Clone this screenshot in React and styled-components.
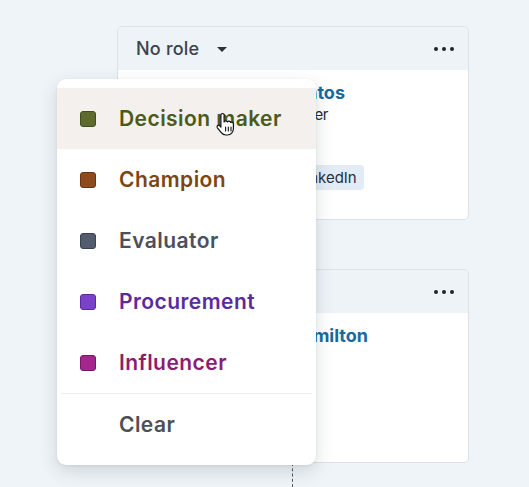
import React from 'react'
import styled, { createGlobalStyle } from 'styled-components'

const GlobalStyle = createGlobalStyle`
  html, body {
    margin: 0;
    padding: 0;
    background: #eff4f8;
    font-family: Inter, 'Liberation Sans', Arial, sans-serif;
    -webkit-font-smoothing: antialiased;
  }
`

const Page = styled.div`
  position: relative;
  width: 529px;
  height: 487px;
  overflow: hidden;
  padding: 26px 0 0 117px;
  box-sizing: border-box;
`

const Column = styled.div`
  display: flex;
  flex-direction: column;
  width: 352px;
`

const Card = styled.div`
  height: 194px;
  background: #fff;
  border: 1px solid #dbe2e9;
  border-radius: 5px;
  box-sizing: border-box;
  display: flex;
  flex-direction: column;
  overflow: hidden;
`

const CardHeader = styled.div`
  height: 43px;
  background: #eef3f8;
  display: flex;
  align-items: center;
  justify-content: space-between;
  padding: 0 14px 0 18px;
`

const RoleButton = styled.div`
  display: flex;
  align-items: center;
  gap: 18px;
  font-size: 18px;
  font-weight: 500;
  letter-spacing: 0.2px;
  color: #3b4250;
`

const Caret = styled.span`
  width: 0;
  height: 0;
  border-left: 5px solid transparent;
  border-right: 5px solid transparent;
  border-top: 5px solid #2c313a;
  margin-top: 1px;
`

const Dots = styled.div`
  display: flex;
  gap: 4px;
  span {
    width: 4px;
    height: 4px;
    border-radius: 50%;
    background: #1f232a;
  }
`

const CardBody = styled.div`
  display: flex;
  gap: 14px;
  padding: 11px 18px 0 ${p => p.$indent}px;
`

const Avatar = styled.div`
  width: 42px;
  height: 42px;
  border-radius: 50%;
  background: #c9d6e2;
  flex-shrink: 0;
`

const Info = styled.div`
  display: flex;
  flex-direction: column;
`

const Name = styled.div`
  font-size: 18px;
  font-weight: 700;
  line-height: 24px;
  color: #176a9c;
`

const Title = styled.div`
  font-size: 15px;
  line-height: 20px;
  letter-spacing: -0.25px;
  color: #23272e;
`

const Tags = styled.div`
  display: flex;
  gap: 10px;
  margin-top: 40px;
`

const Tag = styled.span`
  font-size: 15px;
  line-height: 25px;
  padding: 0 7px;
  border-radius: 4px;
  background: #e1ecf7;
  color: #2a2f36;
`

const Connector = styled.div`
  height: ${p => p.$h}px;
  margin-left: 175px;
  border-left: 1px dashed #4b5563;
`

const Menu = styled.div`
  position: absolute;
  left: 57px;
  top: 79px;
  width: 259px;
  padding: 9px 0 10px;
  box-sizing: border-box;
  background: #fff;
  border-radius: 9px;
  box-shadow: 0 6px 18px rgba(40, 50, 60, 0.16), 0 1px 3px rgba(40, 50, 60, 0.08);
`

const Item = styled.div`
  height: 61px;
  display: flex;
  align-items: center;
  gap: 23px;
  padding-left: 23px;
  background: ${p => (p.$hover ? '#f3f0ed' : 'transparent')};
  font-size: 21px;
  font-weight: 600;
  letter-spacing: 0.45px;
  color: ${p => p.$color};
`

const Swatch = styled.span`
  width: 16px;
  height: 16px;
  border-radius: 3px;
  box-sizing: border-box;
  background: ${p => p.$fill};
  border: 1px solid ${p => p.$edge};
  visibility: ${p => (p.$fill ? 'visible' : 'hidden')};
`

const Divider = styled.div`
  height: 1px;
  margin: 0 4px;
  background: #eceef1;
`

const Cursor = styled.svg`
  position: absolute;
  left: 214px;
  top: 112px;
`

const roles = [
  { label: 'Decision maker', color: '#4a5a1c', fill: '#5f6b2c', edge: '#434d1c', hover: true },
  { label: 'Champion', color: '#7a4713', fill: '#8e4b1c', edge: '#6a3612' },
  { label: 'Evaluator', color: '#4a505e', fill: '#545c70', edge: '#3c4252' },
  { label: 'Procurement', color: '#5a2b9c', fill: '#7b41c9', edge: '#5a2b9c' },
  { label: 'Influencer', color: '#8a1c72', fill: '#a3278d', edge: '#7a1764' },
]

const ContactCard = ({ name, title, tags, indent }) => (
  <Card>
    <CardHeader>
      <RoleButton>
        No role <Caret />
      </RoleButton>
      <Dots>
        <span />
        <span />
        <span />
      </Dots>
    </CardHeader>
    <CardBody $indent={indent}>
      <Avatar />
      <Info>
        <Name>{name}</Name>
        {title && <Title>{title}</Title>}
        {tags && (
          <Tags>
            {tags.map(t => (
              <Tag key={t}>{t}</Tag>
            ))}
          </Tags>
        )}
      </Info>
    </CardBody>
  </Card>
)

const App = () => (
  <>
    <GlobalStyle />
    <Page>
      <Column>
        <ContactCard name="Danielle Santos" title="Finance Manager" tags={['Website', 'LinkedIn']} indent={35} />
        <Connector $h={49} />
        <ContactCard name="Olivia Hamilton" indent={61} />
        <Connector $h={40} />
      </Column>
      <Menu>
        {roles.map(r => (
          <Item key={r.label} $color={r.color} $hover={r.hover}>
            <Swatch $fill={r.fill} $edge={r.edge} />
            {r.label}
          </Item>
        ))}
        <Divider />
        <Item $color="#4d4f53">
          <Swatch />
          Clear
        </Item>
      </Menu>
      <Cursor width="24" height="26" viewBox="0 0 24 26">
        <path
          d="M8.5 1.5c.9 0 1.6.7 1.6 1.6V10c.3-.8 1-1.2 1.7-1.2.8 0 1.4.5 1.7 1.2.3-.5.9-.8 1.5-.8.8 0 1.5.5 1.7 1.3.3-.2.6-.3 1-.3 1 0 1.7.8 1.7 1.7v4.6c0 3.6-2.6 6.5-5.8 6.5h-1.6c-1.9 0-3.6-.9-4.7-2.4L3.4 15.8c-.5-.7-.4-1.7.3-2.2.7-.5 1.6-.4 2.1.2l1.1 1.3V3.1c0-.9.7-1.6 1.6-1.6z"
          fill="#fff"
          stroke="#111"
          strokeWidth="1.2"
          strokeLinejoin="round"
        />
        <path d="M11.6 15v4M14.3 15v4M17 15v4" stroke="#111" strokeWidth="1.1" strokeLinecap="round" />
      </Cursor>
    </Page>
  </>
)

export default App
